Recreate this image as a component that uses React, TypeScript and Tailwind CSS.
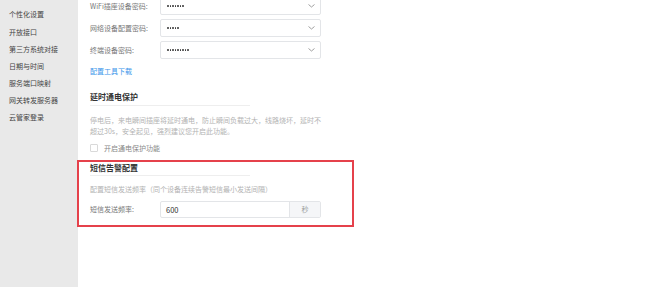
import { ReactNode } from 'react'

const menu = ['个性化设置', '开放接口', '第三方系统对接', '日期与时间', '服务端口映射', '网关转发服务器', '云管家登录']

function Dots({ n }: { n: number }) {
  return (
    <span className="flex items-center gap-[1px]">
      {Array.from({ length: n }).map((_, i) => (
        <span key={i} className="block w-[1.5px] h-[1.5px] rounded-full bg-[#333]" />
      ))}
    </span>
  )
}

function Chevron() {
  return (
    <svg width="7" height="4" viewBox="0 0 7 4" className="text-[#888]">
      <path d="M0.5 0.5 L3.5 3 L6.5 0.5" fill="none" stroke="currentColor" strokeWidth="0.8" />
    </svg>
  )
}

function Row({ label, children, last }: { label: string; children: ReactNode; last?: boolean }) {
  return (
    <div className={`flex items-center ${last ? '' : 'mb-[4px]'}`}>
      <div className="w-[70px] text-[7px] text-[#777]">{label}</div>
      <div className="w-[161px] h-[18px] border border-[#e3e5e8] rounded-[2px] flex items-center justify-between pl-[6px] pr-[5px] bg-white">
        {children}
      </div>
    </div>
  )
}

export default function App() {
  return (
    <div
      className="flex w-[650px] h-[287px] overflow-hidden bg-white"
      style={{ fontFamily: '"Noto Sans CJK SC", "Noto Sans", sans-serif' }}
    >
      <div className="w-[78px] shrink-0 bg-[#e9e9e9] pt-[6px] pl-[9px]">
        {menu.map((m) => (
          <div key={m} className="h-[17.2px] flex items-center text-[7px] text-[#444] whitespace-nowrap">
            {m}
          </div>
        ))}
      </div>

      <div className="flex-1 pl-[12px] -mt-[3px]">
        <Row label="WiFi插座设备密码:">
          <Dots n={7} />
          <Chevron />
        </Row>
        <Row label="网络设备配置密码:">
          <Dots n={5} />
          <Chevron />
        </Row>
        <Row label="终端设备密码:" last>
          <Dots n={9} />
          <Chevron />
        </Row>

        <div className="mt-[7px] h-[10px] leading-[10px] text-[7px] text-[#3b96ea]">配置工具下载</div>

        <div className="mt-[15px] w-[160px] border-b border-[#eeeeee] pb-[2px]">
          <div className="h-[12px] leading-[12px] text-[8px] font-bold text-[#333]">延时通电保护</div>
        </div>

        <div className="mt-[9px] text-[7px] leading-[10.5px] text-[#b3b3b3] whitespace-nowrap">
          <div>停电后，来电瞬间插座将延时通电，防止瞬间负载过大，线路烧坏，延时不</div>
          <div>超过30s，安全起见，强烈建议您开启此功能。</div>
        </div>

        <div className="mt-[8px] flex items-center gap-[6px]">
          <span className="block w-[8px] h-[8px] border border-[#d9d9d9] rounded-[1px] bg-white" />
          <span className="text-[7px] text-[#888] leading-[8px]">开启通电保护功能</span>
        </div>

        <div className="mt-[8px] -ml-[13px] w-[277px] border-2 border-[#e5414b] pl-[11px] pb-[7px]">
          <div className="w-[160px] border-b border-[#eeeeee] pb-[1px]">
            <div className="h-[12px] leading-[12px] text-[8px] font-bold text-[#333]">短信告警配置</div>
          </div>
          <div className="mt-[8px] h-[10px] leading-[10px] text-[7px] text-[#b3b3b3] whitespace-nowrap">
            配置短信发送频率（同个设备连续告警短信最小发送间隔）
          </div>
          <div className="mt-[7px] flex items-center">
            <div className="w-[70px] text-[7px] text-[#777]">短信发送频率:</div>
            <div className="w-[161px] h-[17px] border border-[#e3e5e8] rounded-[2px] flex overflow-hidden">
              <div className="flex-1 flex items-center pl-[5px] text-[7.5px] text-[#333]">600</div>
              <div className="w-[31px] border-l border-[#e3e5e8] bg-[#f5f6f8] flex items-center justify-center text-[7px] text-[#999]">
                秒
              </div>
            </div>
          </div>
        </div>
      </div>
    </div>
  )
}
